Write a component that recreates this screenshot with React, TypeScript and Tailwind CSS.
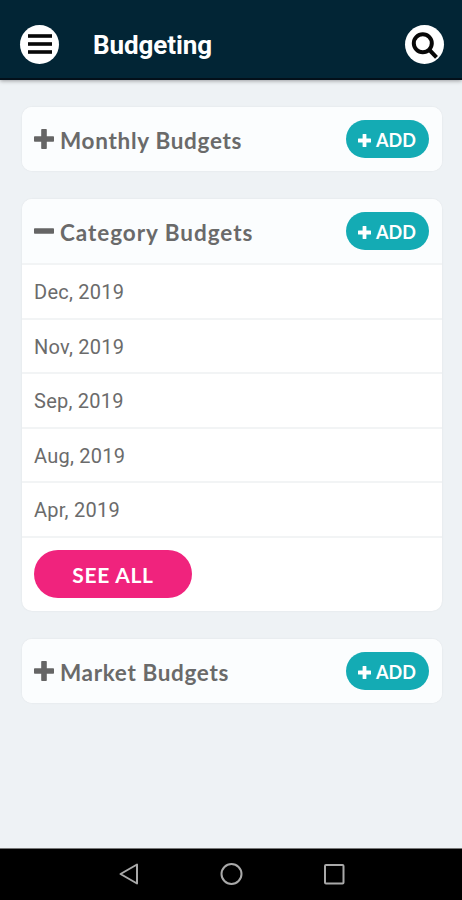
import type { ReactNode } from "react";

const months = ["Dec, 2019", "Nov, 2019", "Sep, 2019", "Aug, 2019", "Apr, 2019"];

function ToggleIcon({ open }: { open: boolean }) {
  return (
    <svg viewBox="0 0 20 20" className="mt-[-1px] h-5 w-5 shrink-0 fill-[#656565]" aria-hidden="true">
      <rect x="0" y="7.2" width="20" height="5.6" rx="0.8" />
      {!open && <rect x="7.2" y="0" width="5.6" height="20" rx="0.8" />}
    </svg>
  );
}

function AddButton() {
  return (
    <button
      type="button"
      className="flex h-[38px] w-[83px] items-center rounded-full bg-[#14abb4] pl-3 font-['Lato',sans-serif] text-[18px] font-bold text-white"
    >
      <svg viewBox="0 0 13 13" className="mt-[2px] mr-[5px] h-[13px] w-[13px] shrink-0 fill-white" aria-hidden="true">
        <rect x="0" y="4.6" width="13" height="3.8" rx="0.5" />
        <rect x="4.6" y="0" width="3.8" height="13" rx="0.5" />
      </svg>
      <span className="mt-[2px]">ADD</span>
    </button>
  );
}

function BudgetCard({ title, spacing, open = false, children }: { title: string; spacing: string; open?: boolean; children?: ReactNode }) {
  return (
    <section className="overflow-hidden rounded-[10px] bg-white shadow-[0_0_2px_rgba(0,0,0,0.08)]">
      <div className="flex h-16 items-center bg-[#fbfdfe] pr-[13px] pl-3">
        <ToggleIcon open={open} />
        <h2 className={`ml-[6px] flex-1 pt-[3px] font-['Lato',sans-serif] text-[22.5px] font-bold whitespace-nowrap text-[#6a6a6a] ${spacing}`}>
          {title}
        </h2>
        <AddButton />
      </div>
      {children}
    </section>
  );
}

export default function App() {
  return (
    <div className="flex h-[900px] w-[462px] flex-col overflow-hidden bg-[#eef2f5] font-['Roboto',sans-serif]">
      <header className="relative flex h-20 shrink-0 items-center border-b-2 border-[#03101a] bg-[#022535] pt-[10px] pr-[18px] pl-5 shadow-[0_1px_4px_rgba(0,0,0,0.35)]">
        <button type="button" aria-label="Menu" className="flex h-[39px] w-[39px] items-center justify-center rounded-full bg-white">
          <svg viewBox="0 0 24 20" className="h-5 w-6 fill-[#080808]">
            <rect y="0.2" width="24" height="3.6" />
            <rect y="8.2" width="24" height="3.6" />
            <rect y="16.2" width="24" height="3.6" />
          </svg>
        </button>
        <h1 className="ml-[34px] flex-1 pt-[3px] text-[26px] font-bold tracking-[-0.1px] text-white">Budgeting</h1>
        <button type="button" aria-label="Search" className="h-[39px] w-[39px] rounded-full bg-white">
          <svg viewBox="0 0 39 39" className="h-full w-full fill-none stroke-[#080808] stroke-4">
            <circle cx="17.8" cy="18.2" r="9" />
            <path d="M24 24.5l7.5 7.8" />
          </svg>
        </button>
      </header>

      <main className="flex flex-1 flex-col gap-7 pt-[27px] pr-5 pl-[22px]">
        <BudgetCard title="Monthly Budgets" spacing="tracking-[0.7px]" />
        <BudgetCard title="Category Budgets" spacing="tracking-[0.95px]" open>
          <ul>
            {months.map((month) => (
              <li key={month} className="flex h-[54.5px] items-center border-t-2 border-[#f2f4f5] pt-[2px] pl-3 text-[20px] tracking-[0.25px] text-[#6b6b6b]">
                {month}
              </li>
            ))}
          </ul>
          <div className="h-[75.5px] border-t-2 border-[#f2f4f5] pt-3 pl-3">
            <button
              type="button"
              className="h-12 w-[158px] rounded-full bg-[#f0237d] pt-[2px] font-['Lato',sans-serif] text-[21px] font-bold tracking-[0.7px] text-white"
            >
              SEE ALL
            </button>
          </div>
        </BudgetCard>
        <BudgetCard title="Market Budgets" spacing="tracking-[0.65px]" />
      </main>

      <nav className="flex h-[52px] shrink-0 items-center border-t border-[#777] bg-black pl-[119px]">
        <svg viewBox="0 0 228 24" className="mt-[-2px] h-6 w-[228px] fill-none stroke-[#a9a9a9] stroke-2" strokeLinejoin="round">
          <path d="M1.5 12L18 2.5v19z" />
          <circle cx="112.5" cy="12" r="10" />
          <rect x="206" y="3" width="18.5" height="18.5" rx="1" />
        </svg>
      </nav>
    </div>
  );
}
